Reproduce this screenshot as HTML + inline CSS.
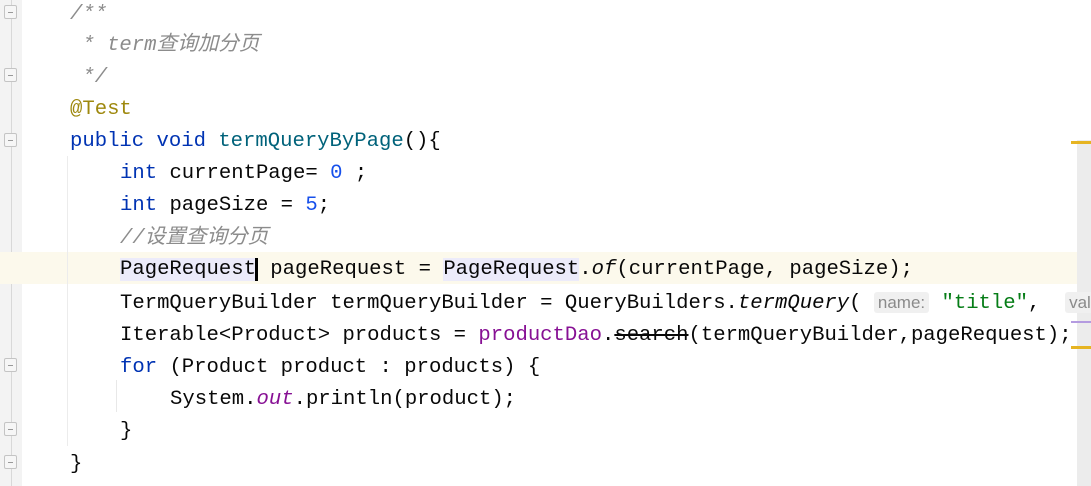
<!DOCTYPE html>
<html><head><meta charset="utf-8"><style>
body{margin:0;width:1091px;height:486px;background:#fff;overflow:hidden;position:relative;font-family:"Liberation Mono","Noto Sans CJK SC",monospace;font-size:20.6px;color:#080808}
.gut{position:absolute;left:0;top:0;width:22px;height:486px;background:#f3f3f3}
.fl{position:absolute;left:11px;top:0;width:1px;height:486px;background:#d8d8d8}
.cur{position:absolute;left:0;top:252px;width:1077px;height:32px;background:#fcf9ec}
.l{position:absolute;height:32px;line-height:32px;white-space:pre}
.c{color:#8c8c8c;font-style:italic}
.k{color:#0033b3}.m{color:#00627a}.a{color:#9e880d}.n{color:#1750eb}.s{color:#067d17}
.p{color:#871094}.i{font-style:italic}
.h{background:#ecebfa}
.hint{font-family:"Liberation Sans",sans-serif;font-size:17px;color:#8a8a8a;background:#f0f0f0;border-radius:3px;padding:1px 4px}
.fold{position:absolute;left:4px;width:13px;height:14px;border:1px solid #c4c4c4;background:#f6f6f6;border-radius:2px;box-sizing:border-box}
.fold:after{content:"";position:absolute;left:3px;top:6px;width:5px;height:1px;background:#999}
.sb{position:absolute;left:1077px;top:140px;width:14px;height:346px;background:#ececec}
</style></head><body>
<div class="gut"></div><div class="fl"></div>
<div class="cur"></div>
<div class="sb"></div>
<div style="position:absolute;left:1071px;top:141px;width:20px;height:3px;background:#e6b422"></div>
<div style="position:absolute;left:1071px;top:321px;width:20px;height:2px;background:#b49be0"></div>
<div style="position:absolute;left:1071px;top:346px;width:20px;height:3px;background:#e6b422"></div>
<div style="position:absolute;left:67px;top:156px;width:1px;height:290px;background:#ececec"></div>
<div style="position:absolute;left:116px;top:380px;width:1px;height:32px;background:#e8e8e8"></div>
<div class="fold" style="top:5px"></div>
<div class="fold" style="top:68px"></div>
<div class="fold" style="top:133px"></div>
<div class="fold" style="top:358px"></div>
<div class="fold" style="top:422px"></div>
<div class="fold" style="top:455px"></div>
<div class="l c" style="left:70px;top:-1px">/**</div>
<div class="l c" style="left:70px;top:30px"> * term查询加分页</div>
<div class="l c" style="left:70px;top:62px"> */</div>
<div class="l a" style="left:70px;top:94px">@Test</div>
<div class="l" style="left:70px;top:126px"><span class="k">public void </span><span class="m">termQueryByPage</span>(){</div>
<div class="l" style="left:120px;top:158px"><span class="k">int </span>currentPage= <span class="n">0</span> ;</div>
<div class="l" style="left:120px;top:190px"><span class="k">int </span>pageSize = <span class="n">5</span>;</div>
<div class="l c" style="left:120px;top:223px">//设置查询分页</div>
<div class="l" style="left:120px;top:254px"><span class="h">PageRequest</span><span style="border-left:3px solid #000;margin-left:-1px"></span> pageRequest = <span class="h">PageRequest</span>.<span class="i">of</span>(currentPage, pageSize);</div>
<div class="l" style="left:120px;top:287px">TermQueryBuilder termQueryBuilder = QueryBuilders.<span class="i">termQuery</span>( <span class="hint">name:</span> <span class="s">"title"</span>,  <span class="hint">valu</span></div>
<div class="l" style="left:120px;top:320px">Iterable&lt;Product&gt; products = <span class="p">productDao</span>.<span style="text-decoration:line-through">search</span>(termQueryBuilder,pageRequest);</div>
<div class="l" style="left:120px;top:352px"><span class="k">for </span>(Product product : products) {</div>
<div class="l" style="left:170px;top:384px">System.<span class="p i">out</span>.println(product);</div>
<div class="l" style="left:120px;top:416px">}</div>
<div class="l" style="left:70px;top:449px">}</div>
</body></html>
